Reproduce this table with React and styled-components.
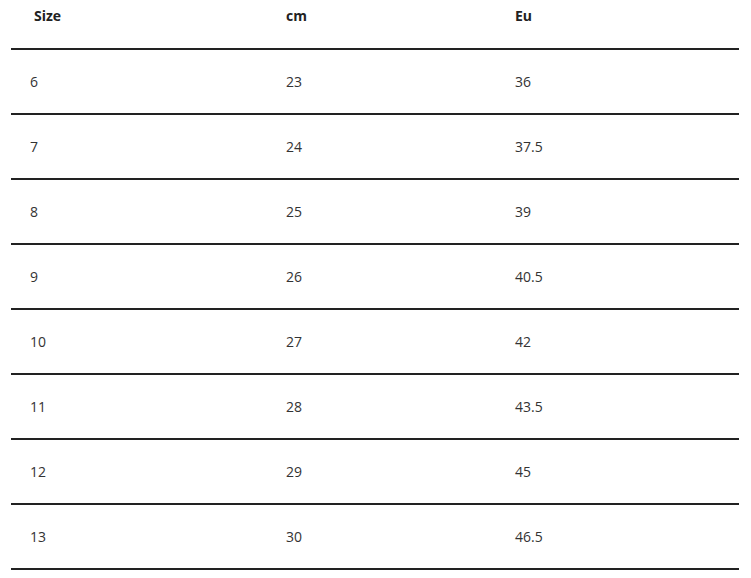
import React from 'react';
import styled, { createGlobalStyle } from 'styled-components';

const rows = [
  ['6', '23', '36'],
  ['7', '24', '37.5'],
  ['8', '25', '39'],
  ['9', '26', '40.5'],
  ['10', '27', '42'],
  ['11', '28', '43.5'],
  ['12', '29', '45'],
  ['13', '30', '46.5'],
];

function App() {
  return (
    <>
      <GlobalStyle />
      <SizeTable>
        <HeaderRow>
          <HeaderCell $first>Size</HeaderCell>
          <HeaderCell>cm</HeaderCell>
          <HeaderCell>Eu</HeaderCell>
        </HeaderRow>
        {rows.map((row) => (
          <Row key={row[0]}>
            {row.map((value, i) => (
              <Cell key={i}>{value}</Cell>
            ))}
          </Row>
        ))}
      </SizeTable>
    </>
  );
}

const GlobalStyle = createGlobalStyle`
  body {
    margin: 0;
    background: #fff;
    font-family: "Open Sans", "Liberation Sans", sans-serif;
    color: #333;
  }
`;

const SizeTable = styled.div`
  margin-left: 11px;
  width: 728px;
`;

const HeaderRow = styled.div`
  display: grid;
  grid-template-columns: 256px 229px 243px;
  height: 48px;
  border-bottom: 2px solid #222;
`;

const HeaderCell = styled.div`
  padding-top: 6px;
  padding-left: ${(props) => (props.$first ? '23px' : '19px')};
  font-size: 14px;
  font-weight: 700;
  color: #222;
  line-height: 20px;
`;

const Row = styled.div`
  display: grid;
  grid-template-columns: 256px 229px 243px;
  height: 63px;
  align-items: center;
  border-bottom: 2px solid #222;
`;

const Cell = styled.div`
  padding-left: 19px;
  font-size: 14px;
  line-height: 20px;
  color: #333;
`;

export default App;
